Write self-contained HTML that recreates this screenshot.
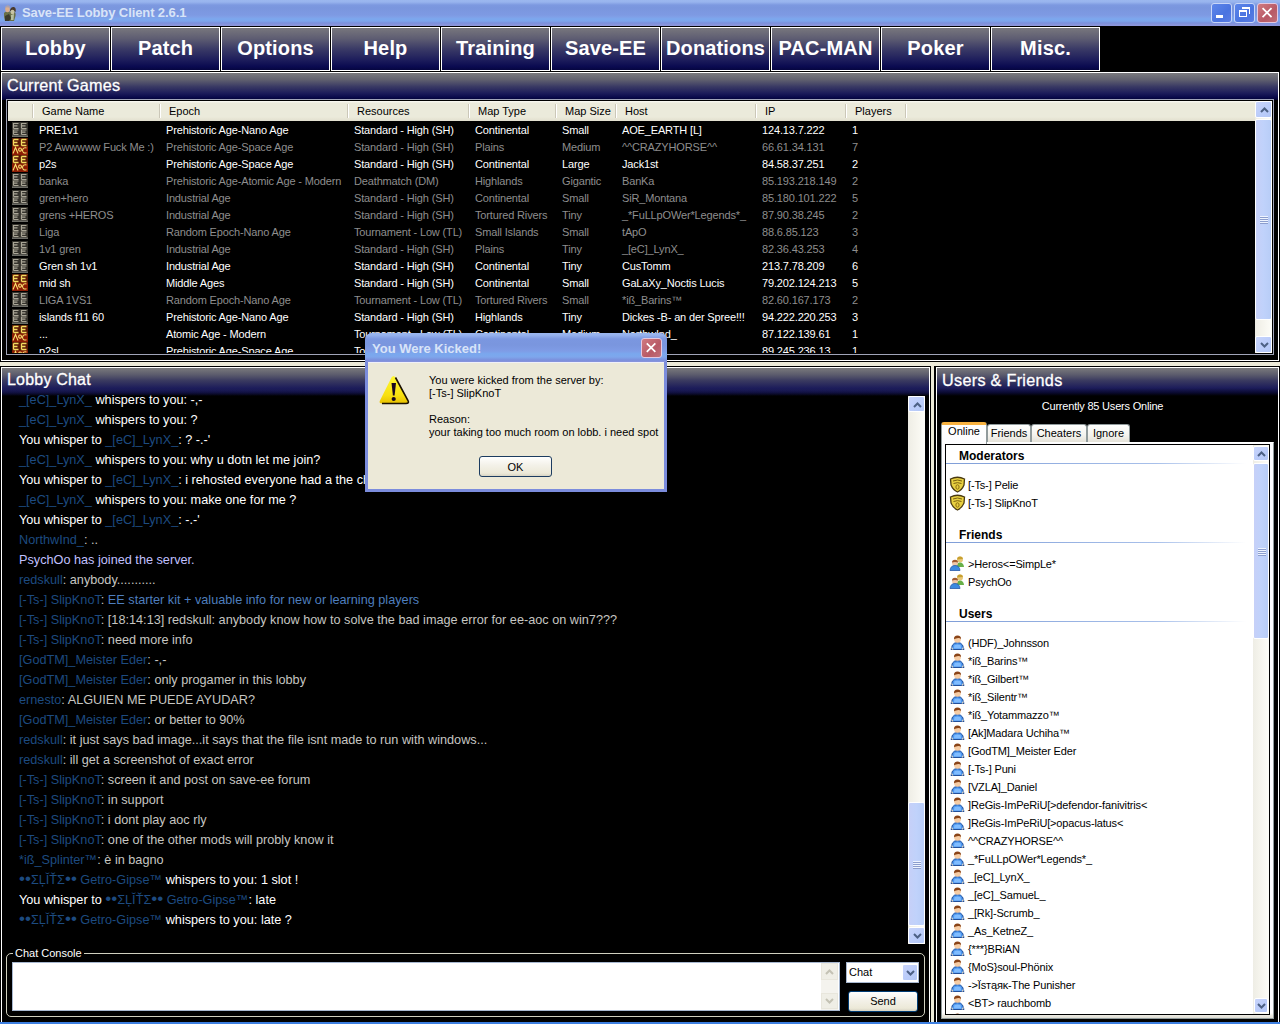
<!DOCTYPE html><html><head><meta charset="utf-8"><style>
*{margin:0;padding:0;box-sizing:border-box}
html,body{width:1280px;height:1024px;overflow:hidden;background:#000;font-family:"Liberation Sans",sans-serif}
.abs{position:absolute}
.nw{white-space:nowrap}
#title{left:0;top:0;width:1280px;height:26px;
 background:linear-gradient(#9bb7ef 0px,#98b4ee 2px,#7d99e0 5px,#7a96de 8px,#7e9ae3 15px,#80a0e8 17px,#7ca8ee 19px,#7da5ec 21px,#7b90dc 23px,#8c96dc 25px)}
#title .t{left:22px;top:4px;font-size:13px;font-weight:bold;color:#d8e4f8;line-height:17px;letter-spacing:-0.1px}
.tb{top:3px;width:21px;height:20px;border:1px solid #c8d6f8;border-radius:3px;background:linear-gradient(135deg,#5d86ea,#4a74e0 60%,#5a7ce4)}
.tb.cl{background:linear-gradient(135deg,#d07a80,#b85a66 60%,#c0707a);border-color:#e4c8e0}
.mb{top:27px;width:109px;height:44px;border:1px solid #fff;
 background:linear-gradient(#78777d 0%,#5e5d72 25%,#3a3a66 50%,#1e1e5c 75%,#0a0a50 92%,#060640 100%);
 color:#fff;font-weight:bold;font-size:20px;text-align:center;line-height:41px;letter-spacing:0.15px}
.panel{border:1px solid #fff;background:#000}
.ph{left:0;top:0;right:0;height:27px;background:linear-gradient(#7a7a7e 0%,#60606f 25%,#3a3a64 50%,#1c1c5a 75%,#080848 92%,#02022c 100%)}
.ph2{left:0;top:0;right:0;height:28px;background:linear-gradient(#7a7a7c 0%,#5a5a6c 25%,#3a3a60 45%,#1c1c5a 72%,#0a0a30 88%,#000 100%)}
.pt{color:#fff;font-size:16px;line-height:20px}
.lv{font-size:11px;line-height:17px;letter-spacing:-0.15px}
.hdr{background:linear-gradient(#fbfbf4 0,#f4f3ea 1px,#ebeadb 2px,#ebeadb 16px,#e6e4d4 18px,#e2dfd0 20px);color:#000;font-size:11px;line-height:18px}
.sep{top:3px;width:2px;height:14px;border-left:1px solid #cbc7b8;border-right:1px solid #fff}
.row{left:0;height:17px;width:1247px}
.row span{position:absolute;top:1px;white-space:nowrap}
.w{color:#fff}.g{color:#8e8e8e}
.sbtrk{background:linear-gradient(90deg,#eeede5,#f6f5ee 50%,#fdfdf8)}
.sbbtn{border:1px solid #fff;border-radius:2px;background:linear-gradient(135deg,#c8d4fb,#bccdfa 50%,#b2c6f6)}
.thumb{border:1px solid #fff;border-radius:2px;background:linear-gradient(90deg,#c6d0f8,#c0d2fb 50%,#b8cdf7)}
.chat{font-size:12.7px;line-height:20px;color:#c6c6c2}
.chat div{position:absolute;left:17px;white-space:nowrap}
.n{color:#1d4b80}
.wh{color:#fff}
.ul{font-size:11px;color:#000;letter-spacing:-0.15px}
.sh{font-size:12px;font-weight:bold;color:#000}
</style></head><body>
<div id="title" class="abs">
<svg class="abs" style="left:2px;top:2px" width="16" height="20" viewBox="0 0 16 20"><path d="M2 11 Q3 9 6 9.5 L12 9.5 Q14 10 13.5 14 L12 19 L3 19 Q1.5 15 2 11Z" fill="#6a7048"/><path d="M3 14 L7 12 L9 16 L7 19 L3 19Z" fill="#3c3a2c"/><path d="M9 13 L12 12 L11.5 18 L9 18Z" fill="#b8c0a0"/><ellipse cx="5.5" cy="7" rx="2.3" ry="3.3" fill="#dcae8c"/><path d="M3 5.5 Q5 1.5 8 4.5 L7.5 6 Q5 4.5 3.2 6.5Z" fill="#a8a0b0"/><path d="M8 8 Q9 4.5 12 5 Q14.5 6 13.5 10 Q11 8 8 9Z" fill="#4a3a2c"/><ellipse cx="10.5" cy="10" rx="2" ry="2.2" fill="#c8c4a4"/></svg>
<div class="abs t nw">Save-EE Lobby Client 2.6.1</div>
<div class="abs tb" style="left:1211px"><div class="abs" style="left:4px;top:11px;width:7px;height:3px;background:#fff"></div></div>
<div class="abs tb" style="left:1234px"><div class="abs" style="left:4px;top:6px;width:8px;height:7px;border:1px solid #fff;border-top-width:2px"></div><div class="abs" style="left:7px;top:3px;width:8px;height:7px;border:1px solid #fff;border-top-width:2px;border-left:none;border-bottom:none"></div></div>
<svg class="abs tb cl" style="left:1257px" width="21" height="20" viewBox="0 0 21 20"><path d="M5 4.5 L15 14.5 M15 4.5 L5 14.5" stroke="#fff" stroke-width="2"/></svg>
</div>
<div class="abs mb" style="left:1px">Lobby</div>
<div class="abs mb" style="left:111px">Patch</div>
<div class="abs mb" style="left:221px">Options</div>
<div class="abs mb" style="left:331px">Help</div>
<div class="abs mb" style="left:441px">Training</div>
<div class="abs mb" style="left:551px">Save-EE</div>
<div class="abs mb" style="left:661px">Donations</div>
<div class="abs mb" style="left:771px">PAC-MAN</div>
<div class="abs mb" style="left:881px">Poker</div>
<div class="abs mb" style="left:991px">Misc.</div>
<div class="abs panel" style="left:1px;top:72px;width:1278px;height:289px">
<div class="abs ph"></div>
<div class="abs pt nw" style="left:5px;top:2px;font-size:16.2px;letter-spacing:0.2px;-webkit-text-stroke:0.3px #fff">Current Games</div>
<div class="abs" style="left:4px;top:26px;width:1268px;height:256px;border:1px solid #a0a4b8;background:#000">
<div class="abs" style="left:0;top:0;width:1266px;height:254px;border:1px solid #000;overflow:hidden">
<div class="abs hdr" style="left:0;top:0;width:1247px;height:20px">
<div class="abs sep" style="left:24px"></div>
<div class="abs sep" style="left:151px"></div>
<div class="abs sep" style="left:339px"></div>
<div class="abs sep" style="left:460px"></div>
<div class="abs sep" style="left:547px"></div>
<div class="abs sep" style="left:607px"></div>
<div class="abs sep" style="left:747px"></div>
<div class="abs sep" style="left:837px"></div>
<div class="abs sep" style="left:897px"></div>
<div class="abs nw" style="left:34px;top:1px">Game Name</div>
<div class="abs nw" style="left:161px;top:1px">Epoch</div>
<div class="abs nw" style="left:349px;top:1px">Resources</div>
<div class="abs nw" style="left:470px;top:1px">Map Type</div>
<div class="abs nw" style="left:557px;top:1px">Map Size</div>
<div class="abs nw" style="left:617px;top:1px">Host</div>
<div class="abs nw" style="left:757px;top:1px">IP</div>
<div class="abs nw" style="left:847px;top:1px">Players</div>
</div>
<div class="abs row lv w" style="top:20px">
<svg class="abs" style="left:4px;top:1px" width="16" height="15" viewBox="0 0 16 15"><rect x="0" y="0" width="16" height="14" fill="#34322c"/><path d="M1.5 1v5.5M1.5 1.5h5M1.5 3.8h4M1.5 6.5h5M9.5 1v5.5M9.5 1.5h5M9.5 3.8h4M9.5 6.5h5M1.5 7.5v5M1.5 8h5M1.5 10.2h4M1.5 12.5h5M9.5 7.5v5M9.5 8h5M9.5 10.2h4M9.5 12.5h5" stroke="#a9a596" stroke-width="1.2" fill="none"/><rect x="0" y="13.5" width="16" height="1.5" fill="#6c6c66"/></svg>
<span style="left:31px">PRE1v1</span>
<span style="left:158px">Prehistoric Age-Nano Age</span>
<span style="left:346px">Standard - High (SH)</span>
<span style="left:467px">Continental</span>
<span style="left:554px">Small</span>
<span style="left:614px">AOE_EARTH [L]</span>
<span style="left:754px">124.13.7.222</span>
<span style="left:844px">1</span>
</div>
<div class="abs row lv g" style="top:37px">
<svg class="abs" style="left:4px;top:0px" width="16" height="17" viewBox="0 0 16 17"><rect x="0" y="0" width="16" height="17" fill="#8c1c04"/><rect x="0" y="0" width="16" height="8.5" fill="#5a1804"/><path d="M1.5 1.5h5M1.5 1.5v6M1.5 4.5h4M1.5 7.5h5M9.5 1.5h5M9.5 1.5v6M9.5 4.5h4M9.5 7.5h5" stroke="#f4dc60" stroke-width="1.3" fill="none"/><path d="M1 15.5 L3.5 9.5 L6 15.5 M8 10 a1.4 1.6 0 1 0 0.1 0 M14.5 10 Q11 9 10.5 12.5 Q11 15.8 14.5 14.8" stroke="#f8e070" stroke-width="1.1" fill="none"/></svg>
<span style="left:31px">P2 Awwwww Fuck Me :)</span>
<span style="left:158px">Prehistoric Age-Space Age</span>
<span style="left:346px">Standard - High (SH)</span>
<span style="left:467px">Plains</span>
<span style="left:554px">Medium</span>
<span style="left:614px">^^CRAZYHORSE^^</span>
<span style="left:754px">66.61.34.131</span>
<span style="left:844px">7</span>
</div>
<div class="abs row lv w" style="top:54px">
<svg class="abs" style="left:4px;top:0px" width="16" height="17" viewBox="0 0 16 17"><rect x="0" y="0" width="16" height="17" fill="#8c1c04"/><rect x="0" y="0" width="16" height="8.5" fill="#5a1804"/><path d="M1.5 1.5h5M1.5 1.5v6M1.5 4.5h4M1.5 7.5h5M9.5 1.5h5M9.5 1.5v6M9.5 4.5h4M9.5 7.5h5" stroke="#f4dc60" stroke-width="1.3" fill="none"/><path d="M1 15.5 L3.5 9.5 L6 15.5 M8 10 a1.4 1.6 0 1 0 0.1 0 M14.5 10 Q11 9 10.5 12.5 Q11 15.8 14.5 14.8" stroke="#f8e070" stroke-width="1.1" fill="none"/></svg>
<span style="left:31px">p2s</span>
<span style="left:158px">Prehistoric Age-Space Age</span>
<span style="left:346px">Standard - High (SH)</span>
<span style="left:467px">Continental</span>
<span style="left:554px">Large</span>
<span style="left:614px">Jack1st</span>
<span style="left:754px">84.58.37.251</span>
<span style="left:844px">2</span>
</div>
<div class="abs row lv g" style="top:71px">
<svg class="abs" style="left:4px;top:1px" width="16" height="15" viewBox="0 0 16 15"><rect x="0" y="0" width="16" height="14" fill="#34322c"/><path d="M1.5 1v5.5M1.5 1.5h5M1.5 3.8h4M1.5 6.5h5M9.5 1v5.5M9.5 1.5h5M9.5 3.8h4M9.5 6.5h5M1.5 7.5v5M1.5 8h5M1.5 10.2h4M1.5 12.5h5M9.5 7.5v5M9.5 8h5M9.5 10.2h4M9.5 12.5h5" stroke="#a9a596" stroke-width="1.2" fill="none"/><rect x="0" y="13.5" width="16" height="1.5" fill="#6c6c66"/></svg>
<span style="left:31px">banka</span>
<span style="left:158px">Prehistoric Age-Atomic Age - Modern</span>
<span style="left:346px">Deathmatch (DM)</span>
<span style="left:467px">Highlands</span>
<span style="left:554px">Gigantic</span>
<span style="left:614px">BanKa</span>
<span style="left:754px">85.193.218.149</span>
<span style="left:844px">2</span>
</div>
<div class="abs row lv g" style="top:88px">
<svg class="abs" style="left:4px;top:1px" width="16" height="15" viewBox="0 0 16 15"><rect x="0" y="0" width="16" height="14" fill="#34322c"/><path d="M1.5 1v5.5M1.5 1.5h5M1.5 3.8h4M1.5 6.5h5M9.5 1v5.5M9.5 1.5h5M9.5 3.8h4M9.5 6.5h5M1.5 7.5v5M1.5 8h5M1.5 10.2h4M1.5 12.5h5M9.5 7.5v5M9.5 8h5M9.5 10.2h4M9.5 12.5h5" stroke="#a9a596" stroke-width="1.2" fill="none"/><rect x="0" y="13.5" width="16" height="1.5" fill="#6c6c66"/></svg>
<span style="left:31px">gren+hero</span>
<span style="left:158px">Industrial Age</span>
<span style="left:346px">Standard - High (SH)</span>
<span style="left:467px">Continental</span>
<span style="left:554px">Small</span>
<span style="left:614px">SiR_Montana</span>
<span style="left:754px">85.180.101.222</span>
<span style="left:844px">5</span>
</div>
<div class="abs row lv g" style="top:105px">
<svg class="abs" style="left:4px;top:1px" width="16" height="15" viewBox="0 0 16 15"><rect x="0" y="0" width="16" height="14" fill="#34322c"/><path d="M1.5 1v5.5M1.5 1.5h5M1.5 3.8h4M1.5 6.5h5M9.5 1v5.5M9.5 1.5h5M9.5 3.8h4M9.5 6.5h5M1.5 7.5v5M1.5 8h5M1.5 10.2h4M1.5 12.5h5M9.5 7.5v5M9.5 8h5M9.5 10.2h4M9.5 12.5h5" stroke="#a9a596" stroke-width="1.2" fill="none"/><rect x="0" y="13.5" width="16" height="1.5" fill="#6c6c66"/></svg>
<span style="left:31px">grens +HEROS</span>
<span style="left:158px">Industrial Age</span>
<span style="left:346px">Standard - High (SH)</span>
<span style="left:467px">Tortured Rivers</span>
<span style="left:554px">Tiny</span>
<span style="left:614px">_*FuLLpOWer*Legends*_</span>
<span style="left:754px">87.90.38.245</span>
<span style="left:844px">2</span>
</div>
<div class="abs row lv g" style="top:122px">
<svg class="abs" style="left:4px;top:1px" width="16" height="15" viewBox="0 0 16 15"><rect x="0" y="0" width="16" height="14" fill="#34322c"/><path d="M1.5 1v5.5M1.5 1.5h5M1.5 3.8h4M1.5 6.5h5M9.5 1v5.5M9.5 1.5h5M9.5 3.8h4M9.5 6.5h5M1.5 7.5v5M1.5 8h5M1.5 10.2h4M1.5 12.5h5M9.5 7.5v5M9.5 8h5M9.5 10.2h4M9.5 12.5h5" stroke="#a9a596" stroke-width="1.2" fill="none"/><rect x="0" y="13.5" width="16" height="1.5" fill="#6c6c66"/></svg>
<span style="left:31px">Liga</span>
<span style="left:158px">Random Epoch-Nano Age</span>
<span style="left:346px">Tournament - Low (TL)</span>
<span style="left:467px">Small Islands</span>
<span style="left:554px">Small</span>
<span style="left:614px">tApO</span>
<span style="left:754px">88.6.85.123</span>
<span style="left:844px">3</span>
</div>
<div class="abs row lv g" style="top:139px">
<svg class="abs" style="left:4px;top:1px" width="16" height="15" viewBox="0 0 16 15"><rect x="0" y="0" width="16" height="14" fill="#34322c"/><path d="M1.5 1v5.5M1.5 1.5h5M1.5 3.8h4M1.5 6.5h5M9.5 1v5.5M9.5 1.5h5M9.5 3.8h4M9.5 6.5h5M1.5 7.5v5M1.5 8h5M1.5 10.2h4M1.5 12.5h5M9.5 7.5v5M9.5 8h5M9.5 10.2h4M9.5 12.5h5" stroke="#a9a596" stroke-width="1.2" fill="none"/><rect x="0" y="13.5" width="16" height="1.5" fill="#6c6c66"/></svg>
<span style="left:31px">1v1 gren</span>
<span style="left:158px">Industrial Age</span>
<span style="left:346px">Standard - High (SH)</span>
<span style="left:467px">Plains</span>
<span style="left:554px">Tiny</span>
<span style="left:614px">_[eC]_LynX_</span>
<span style="left:754px">82.36.43.253</span>
<span style="left:844px">4</span>
</div>
<div class="abs row lv w" style="top:156px">
<svg class="abs" style="left:4px;top:1px" width="16" height="15" viewBox="0 0 16 15"><rect x="0" y="0" width="16" height="14" fill="#34322c"/><path d="M1.5 1v5.5M1.5 1.5h5M1.5 3.8h4M1.5 6.5h5M9.5 1v5.5M9.5 1.5h5M9.5 3.8h4M9.5 6.5h5M1.5 7.5v5M1.5 8h5M1.5 10.2h4M1.5 12.5h5M9.5 7.5v5M9.5 8h5M9.5 10.2h4M9.5 12.5h5" stroke="#a9a596" stroke-width="1.2" fill="none"/><rect x="0" y="13.5" width="16" height="1.5" fill="#6c6c66"/></svg>
<span style="left:31px">Gren sh 1v1</span>
<span style="left:158px">Industrial Age</span>
<span style="left:346px">Standard - High (SH)</span>
<span style="left:467px">Continental</span>
<span style="left:554px">Tiny</span>
<span style="left:614px">CusTomm</span>
<span style="left:754px">213.7.78.209</span>
<span style="left:844px">6</span>
</div>
<div class="abs row lv w" style="top:173px">
<svg class="abs" style="left:4px;top:0px" width="16" height="17" viewBox="0 0 16 17"><rect x="0" y="0" width="16" height="17" fill="#8c1c04"/><rect x="0" y="0" width="16" height="8.5" fill="#5a1804"/><path d="M1.5 1.5h5M1.5 1.5v6M1.5 4.5h4M1.5 7.5h5M9.5 1.5h5M9.5 1.5v6M9.5 4.5h4M9.5 7.5h5" stroke="#f4dc60" stroke-width="1.3" fill="none"/><path d="M1 15.5 L3.5 9.5 L6 15.5 M8 10 a1.4 1.6 0 1 0 0.1 0 M14.5 10 Q11 9 10.5 12.5 Q11 15.8 14.5 14.8" stroke="#f8e070" stroke-width="1.1" fill="none"/></svg>
<span style="left:31px">mid sh</span>
<span style="left:158px">Middle Ages</span>
<span style="left:346px">Standard - High (SH)</span>
<span style="left:467px">Continental</span>
<span style="left:554px">Small</span>
<span style="left:614px">GaLaXy_Noctis Lucis</span>
<span style="left:754px">79.202.124.213</span>
<span style="left:844px">5</span>
</div>
<div class="abs row lv g" style="top:190px">
<svg class="abs" style="left:4px;top:1px" width="16" height="15" viewBox="0 0 16 15"><rect x="0" y="0" width="16" height="14" fill="#34322c"/><path d="M1.5 1v5.5M1.5 1.5h5M1.5 3.8h4M1.5 6.5h5M9.5 1v5.5M9.5 1.5h5M9.5 3.8h4M9.5 6.5h5M1.5 7.5v5M1.5 8h5M1.5 10.2h4M1.5 12.5h5M9.5 7.5v5M9.5 8h5M9.5 10.2h4M9.5 12.5h5" stroke="#a9a596" stroke-width="1.2" fill="none"/><rect x="0" y="13.5" width="16" height="1.5" fill="#6c6c66"/></svg>
<span style="left:31px">LIGA 1VS1</span>
<span style="left:158px">Random Epoch-Nano Age</span>
<span style="left:346px">Tournament - Low (TL)</span>
<span style="left:467px">Tortured Rivers</span>
<span style="left:554px">Small</span>
<span style="left:614px">*iß_Barins™</span>
<span style="left:754px">82.60.167.173</span>
<span style="left:844px">2</span>
</div>
<div class="abs row lv w" style="top:207px">
<svg class="abs" style="left:4px;top:1px" width="16" height="15" viewBox="0 0 16 15"><rect x="0" y="0" width="16" height="14" fill="#34322c"/><path d="M1.5 1v5.5M1.5 1.5h5M1.5 3.8h4M1.5 6.5h5M9.5 1v5.5M9.5 1.5h5M9.5 3.8h4M9.5 6.5h5M1.5 7.5v5M1.5 8h5M1.5 10.2h4M1.5 12.5h5M9.5 7.5v5M9.5 8h5M9.5 10.2h4M9.5 12.5h5" stroke="#a9a596" stroke-width="1.2" fill="none"/><rect x="0" y="13.5" width="16" height="1.5" fill="#6c6c66"/></svg>
<span style="left:31px">islands f11 60</span>
<span style="left:158px">Prehistoric Age-Nano Age</span>
<span style="left:346px">Standard - High (SH)</span>
<span style="left:467px">Highlands</span>
<span style="left:554px">Tiny</span>
<span style="left:614px">Dickes -B- an der Spree!!!</span>
<span style="left:754px">94.222.220.253</span>
<span style="left:844px">3</span>
</div>
<div class="abs row lv w" style="top:224px">
<svg class="abs" style="left:4px;top:0px" width="16" height="17" viewBox="0 0 16 17"><rect x="0" y="0" width="16" height="17" fill="#8c1c04"/><rect x="0" y="0" width="16" height="8.5" fill="#5a1804"/><path d="M1.5 1.5h5M1.5 1.5v6M1.5 4.5h4M1.5 7.5h5M9.5 1.5h5M9.5 1.5v6M9.5 4.5h4M9.5 7.5h5" stroke="#f4dc60" stroke-width="1.3" fill="none"/><path d="M1 15.5 L3.5 9.5 L6 15.5 M8 10 a1.4 1.6 0 1 0 0.1 0 M14.5 10 Q11 9 10.5 12.5 Q11 15.8 14.5 14.8" stroke="#f8e070" stroke-width="1.1" fill="none"/></svg>
<span style="left:31px">...</span>
<span style="left:158px">Atomic Age - Modern</span>
<span style="left:346px">Tournament - Low (TL)</span>
<span style="left:467px">Continental</span>
<span style="left:554px">Medium</span>
<span style="left:614px">NorthwInd_</span>
<span style="left:754px">87.122.139.61</span>
<span style="left:844px">1</span>
</div>
<div class="abs row lv w" style="top:241px">
<svg class="abs" style="left:4px;top:0px" width="16" height="17" viewBox="0 0 16 17"><rect x="0" y="0" width="16" height="17" fill="#8c1c04"/><rect x="0" y="0" width="16" height="8.5" fill="#5a1804"/><path d="M1.5 1.5h5M1.5 1.5v6M1.5 4.5h4M1.5 7.5h5M9.5 1.5h5M9.5 1.5v6M9.5 4.5h4M9.5 7.5h5" stroke="#f4dc60" stroke-width="1.3" fill="none"/><path d="M1 15.5 L3.5 9.5 L6 15.5 M8 10 a1.4 1.6 0 1 0 0.1 0 M14.5 10 Q11 9 10.5 12.5 Q11 15.8 14.5 14.8" stroke="#f8e070" stroke-width="1.1" fill="none"/></svg>
<span style="left:31px">p2sl</span>
<span style="left:158px">Prehistoric Age-Space Age</span>
<span style="left:346px">Tournament - Low (TL)</span>
<span style="left:467px">Continental</span>
<span style="left:554px">Small</span>
<span style="left:614px">p2sl</span>
<span style="left:754px">89.245.236.13</span>
<span style="left:844px">1</span>
</div>
<div class="abs sbtrk" style="left:1247px;top:0;width:17px;height:252px">
<div class="abs sbbtn" style="left:0;top:0;width:17px;height:17px"><svg class="abs" style="left:4px;top:5px" width="9" height="6"><path d="M1 5 L4.5 1.5 L8 5" stroke="#4d6185" stroke-width="2" fill="none"/></svg></div>
<div class="abs thumb" style="left:0;top:18px;width:17px;height:201px"><div class="abs" style="left:4px;top:96px;width:8px;height:8px;background:repeating-linear-gradient(#eef4ff 0,#eef4ff 1px,#8c9ece 1px,#8c9ece 2px)"></div></div>
<div class="abs sbbtn" style="left:0;top:235px;width:17px;height:17px"><svg class="abs" style="left:4px;top:5px" width="9" height="6"><path d="M1 1 L4.5 4.5 L8 1" stroke="#4d6185" stroke-width="2" fill="none"/></svg></div>
</div>
</div></div>
</div>
<div class="abs" style="left:0;top:362px;width:1280px;height:4px;background:#ecead8"></div>
<div class="abs" style="left:931px;top:362px;width:3px;height:660px;background:#ecead8"></div>
<div class="abs panel" style="left:1px;top:367px;width:929px;height:700px">
<div class="abs ph2"></div>
<div class="abs pt nw" style="left:5px;top:2px;font-size:16px;letter-spacing:0.2px;-webkit-text-stroke:0.3px #fff">Lobby Chat</div>
<div class="abs chat" style="left:0;top:0;width:906px;height:576px;overflow:hidden">
<div style="top:22px"><span class="n">_[eC]_LynX_</span><span class="wh"> whispers to you: -,-</span></div>
<div style="top:42px"><span class="n">_[eC]_LynX_</span><span class="wh"> whispers to you: ?</span></div>
<div style="top:62px"><span class="wh">You whisper to </span><span class="n">_[eC]_LynX_</span><span class="wh">: ? -.-&#x27;</span></div>
<div style="top:82px"><span class="n">_[eC]_LynX_</span><span class="wh"> whispers to you: why u dotn let me join?</span></div>
<div style="top:102px"><span class="wh">You whisper to </span><span class="n">_[eC]_LynX_</span><span class="wh">: i rehosted everyone had a the chance to join</span></div>
<div style="top:122px"><span class="n">_[eC]_LynX_</span><span class="wh"> whispers to you: make one for me ?</span></div>
<div style="top:142px"><span class="wh">You whisper to </span><span class="n">_[eC]_LynX_</span><span class="wh">: -.-&#x27;</span></div>
<div style="top:162px"><span class="n">NorthwInd_</span>: ..</div>
<div style="top:182px"><span style="color:#c0c0ff">PsychOo has joined the server.</span></div>
<div style="top:202px"><span class="n">redskull</span>: anybody...........</div>
<div style="top:222px"><span class="n">[-Ts-] SlipKnoT</span>: <span style="color:#4e7ebe">EE starter kit + valuable info for new or learning players</span></div>
<div style="top:242px"><span class="n">[-Ts-] SlipKnoT</span>: [18:14:13] redskull: anybody know how to solve the bad image error for ee-aoc on win7???</div>
<div style="top:262px"><span class="n">[-Ts-] SlipKnoT</span>: need more info</div>
<div style="top:282px"><span class="n">[GodTM]_Meister Eder</span>: -,-</div>
<div style="top:302px"><span class="n">[GodTM]_Meister Eder</span>: only progamer in this lobby</div>
<div style="top:322px"><span class="n">ernesto</span>: ALGUIEN ME PUEDE AYUDAR?</div>
<div style="top:342px"><span class="n">[GodTM]_Meister Eder</span>: or better to 90%</div>
<div style="top:362px"><span class="n">redskull</span>: it just says bad image...it says that the file isnt made to run with windows...</div>
<div style="top:382px"><span class="n">redskull</span>: ill get a screenshot of exact error</div>
<div style="top:402px"><span class="n">[-Ts-] SlipKnoT</span>: screen it and post on save-ee forum</div>
<div style="top:422px"><span class="n">[-Ts-] SlipKnoT</span>: in support</div>
<div style="top:442px"><span class="n">[-Ts-] SlipKnoT</span>: i dont play aoc rly</div>
<div style="top:462px"><span class="n">[-Ts-] SlipKnoT</span>: one of the other mods will probly know it</div>
<div style="top:482px"><span class="n">*iß_Splinter™</span>: è in bagno</div>
<div style="top:502px"><span class="n"><span style="font-size:17px;line-height:10px">••</span>ΣĻĬŤΣ<span style="font-size:17px;line-height:10px">••</span> Getro-Gipse™</span><span class="wh"> whispers to you: 1 slot !</span></div>
<div style="top:522px"><span class="wh">You whisper to </span><span class="n"><span style="font-size:17px;line-height:10px">••</span>ΣĻĬŤΣ<span style="font-size:17px;line-height:10px">••</span> Getro-Gipse™</span><span class="wh">: late</span></div>
<div style="top:542px"><span class="n"><span style="font-size:17px;line-height:10px">••</span>ΣĻĬŤΣ<span style="font-size:17px;line-height:10px">••</span> Getro-Gipse™</span><span class="wh"> whispers to you: late ?</span></div>
</div>
<div class="abs" style="left:0;top:20px;right:0;height:8px;background:linear-gradient(rgba(28,28,90,0.85),rgba(0,0,0,0))"></div>
<div class="abs sbtrk" style="left:906px;top:28px;width:17px;height:548px">
<div class="abs sbbtn" style="left:0;top:0;width:17px;height:16px"><svg class="abs" style="left:4px;top:5px" width="9" height="6"><path d="M1 5 L4.5 1.5 L8 5" stroke="#4d6185" stroke-width="2" fill="none"/></svg></div>
<div class="abs thumb" style="left:0;top:406px;width:17px;height:124px"><div class="abs" style="left:4px;top:58px;width:8px;height:8px;background:repeating-linear-gradient(#eef4ff 0,#eef4ff 1px,#8c9ece 1px,#8c9ece 2px)"></div></div>
<div class="abs sbbtn" style="left:0;top:531px;width:17px;height:17px"><svg class="abs" style="left:4px;top:5px" width="9" height="6"><path d="M1 1 L4.5 4.5 L8 1" stroke="#4d6185" stroke-width="2" fill="none"/></svg></div>
</div>
<div class="abs" style="left:4px;top:585px;width:919px;height:64px;border:1px solid #d0d0bf;border-radius:5px"></div>
<div class="abs nw" style="left:11px;top:578px;padding:0 2px;background:#000;color:#fff;font-size:11px;line-height:14px">Chat Console</div>
<div class="abs" style="left:10px;top:594px;width:828px;height:49px;background:#fff;border:1px solid #a8b8d0"></div>
<div class="abs" style="left:819px;top:595px;width:17px;height:47px;background:#f4f3ee"></div>
<div class="abs" style="left:819px;top:595px;width:17px;height:17px;background:#efeee6;border:1px solid #e8e6dc"><svg class="abs" style="left:3px;top:5px" width="9" height="6"><path d="M1 5 L4.5 1.5 L8 5" stroke="#c4c2b4" stroke-width="2" fill="none"/></svg></div>
<div class="abs" style="left:819px;top:625px;width:17px;height:16px;background:#efeee6;border:1px solid #e8e6dc"><svg class="abs" style="left:3px;top:4px" width="9" height="6"><path d="M1 1 L4.5 4.5 L8 1" stroke="#c4c2b4" stroke-width="2" fill="none"/></svg></div>
<div class="abs" style="left:844px;top:594px;width:73px;height:21px;background:#fff;border:1px solid #a8b8d0"><div class="abs nw" style="left:2px;top:3px;font-size:11px;line-height:13px;color:#000">Chat</div>
<div class="abs sbbtn" style="left:55px;top:1px;width:16px;height:17px"><svg class="abs" style="left:3px;top:5px" width="9" height="6"><path d="M1 1 L4.5 4.5 L8 1" stroke="#4d6185" stroke-width="2" fill="none"/></svg></div></div>
<div class="abs" style="left:846px;top:623px;width:70px;height:21px;border:1px solid #003c74;border-radius:3px;background:linear-gradient(#fffffe,#f4f2ea 40%,#ece9d8 85%,#d8d4c4);font-size:11px;line-height:19px;text-align:center;color:#000">Send</div>
</div>
<div class="abs panel" style="left:936px;top:367px;width:343px;height:700px">
<div class="abs ph2"></div>
<div class="abs pt nw" style="left:5px;top:2px;font-size:16.2px;letter-spacing:0.3px;-webkit-text-stroke:0.3px #fff">Users &amp; Friends</div>
<div class="abs nw" style="left:-5px;width:341px;top:31px;text-align:center;color:#fff;font-size:11px;line-height:14px;letter-spacing:-0.2px">Currently 85 Users Online</div>
<div class="abs" style="left:4px;top:74px;width:333px;height:577px;background:linear-gradient(#fcfcfe 0,#fcfcfe 570px,#ecebe4 572px,#d8d6cc 576px);border:1px solid #919b9c;border-top-color:#fff"></div>
<div class="abs" style="left:4px;top:54px;width:46px;height:22px;background:linear-gradient(#fffffe,#fcfcfe);border:1px solid #919b9c;border-bottom:none;border-top:3px solid #f8b240;border-radius:3px 3px 0 0;font-size:11px;line-height:13px;color:#000;text-align:center">Online</div>
<div class="abs" style="left:50px;top:56px;width:44px;height:18px;background:linear-gradient(#fffffe,#f4f3ee 60%,#e4e2d8);border:1px solid #919b9c;border-bottom:none;border-radius:3px 3px 0 0;font-size:11px;line-height:16px;color:#000;text-align:center">Friends</div>
<div class="abs" style="left:94px;top:56px;width:56px;height:18px;background:linear-gradient(#fffffe,#f4f3ee 60%,#e4e2d8);border:1px solid #919b9c;border-bottom:none;border-radius:3px 3px 0 0;font-size:11px;line-height:16px;color:#000;text-align:center">Cheaters</div>
<div class="abs" style="left:150px;top:56px;width:43px;height:18px;background:linear-gradient(#fffffe,#f4f3ee 60%,#e4e2d8);border:1px solid #919b9c;border-bottom:none;border-radius:3px 3px 0 0;font-size:11px;line-height:16px;color:#000;text-align:center">Ignore</div>
<div class="abs" style="left:8px;top:76px;width:325px;height:571px;border:1px solid #000;background:#fff;overflow:hidden">
<div class="abs sh nw" style="left:13px;top:4px;line-height:14px">Moderators</div>
<div class="abs" style="left:0;top:18px;width:300px;height:1px;background:linear-gradient(90deg,#7f9ed8,#a8c0ea 70%,#fff)"></div>
<div class="abs" style="left:0;top:32px;width:320px;height:17px"><svg class="abs" style="left:3px;top:-1px" width="17" height="17" viewBox="0 0 17 17"><path d="M1.5 3 Q8.5 -0.5 15.5 3 L15 9 Q13 14 8.5 16 Q4 14 2 9 Z" fill="#e8d040" stroke="#4a3a10" stroke-width="1.3"/><path d="M4 5 Q8.5 3 13 5 M4.5 7.5 Q8.5 5.8 12.5 7.5" stroke="#7a6010" stroke-width="1" fill="none"/><ellipse cx="8.5" cy="11" rx="1.6" ry="2.2" fill="none" stroke="#8a6a10" stroke-width="1"/></svg><div class="abs ul nw" style="left:22px;top:1px;line-height:15px">[-Ts-] Pelie</div></div>
<div class="abs" style="left:0;top:50px;width:320px;height:17px"><svg class="abs" style="left:3px;top:-1px" width="17" height="17" viewBox="0 0 17 17"><path d="M1.5 3 Q8.5 -0.5 15.5 3 L15 9 Q13 14 8.5 16 Q4 14 2 9 Z" fill="#e8d040" stroke="#4a3a10" stroke-width="1.3"/><path d="M4 5 Q8.5 3 13 5 M4.5 7.5 Q8.5 5.8 12.5 7.5" stroke="#7a6010" stroke-width="1" fill="none"/><ellipse cx="8.5" cy="11" rx="1.6" ry="2.2" fill="none" stroke="#8a6a10" stroke-width="1"/></svg><div class="abs ul nw" style="left:22px;top:1px;line-height:15px">[-Ts-] SlipKnoT</div></div>
<div class="abs sh nw" style="left:13px;top:83px;line-height:14px">Friends</div>
<div class="abs" style="left:0;top:97px;width:300px;height:1px;background:linear-gradient(90deg,#7f9ed8,#a8c0ea 70%,#fff)"></div>
<div class="abs" style="left:0;top:111px;width:320px;height:17px"><svg class="abs" style="left:3px;top:-1px" width="17" height="17" viewBox="0 0 17 17"><circle cx="11" cy="4.5" r="3" fill="#e8c878"/><path d="M11 1.5 Q8 1.5 8.2 4.5 L13.8 4 Q14 1.5 11 1.5Z" fill="#c8a030"/><path d="M7 12 Q7.5 7.5 11 7.5 Q14.5 7.5 15 12 Z" fill="#68b048"/><circle cx="6" cy="8" r="3" fill="#f0c8a8"/><path d="M3 7.5 Q3 4.8 6 4.8 Q9 4.8 9 7.5 Q6 6.5 3 7.5Z" fill="#a05a30"/><path d="M1 15.5 Q1.5 10.5 6 10.5 Q10.5 10.5 11 15.5 Z" fill="#3c8ae0" stroke="#2a5aa8" stroke-width="0.8"/></svg><div class="abs ul nw" style="left:22px;top:1px;line-height:15px">&gt;Heros&lt;=SimpLe*</div></div>
<div class="abs" style="left:0;top:129px;width:320px;height:17px"><svg class="abs" style="left:3px;top:-1px" width="17" height="17" viewBox="0 0 17 17"><circle cx="11" cy="4.5" r="3" fill="#e8c878"/><path d="M11 1.5 Q8 1.5 8.2 4.5 L13.8 4 Q14 1.5 11 1.5Z" fill="#c8a030"/><path d="M7 12 Q7.5 7.5 11 7.5 Q14.5 7.5 15 12 Z" fill="#68b048"/><circle cx="6" cy="8" r="3" fill="#f0c8a8"/><path d="M3 7.5 Q3 4.8 6 4.8 Q9 4.8 9 7.5 Q6 6.5 3 7.5Z" fill="#a05a30"/><path d="M1 15.5 Q1.5 10.5 6 10.5 Q10.5 10.5 11 15.5 Z" fill="#3c8ae0" stroke="#2a5aa8" stroke-width="0.8"/></svg><div class="abs ul nw" style="left:22px;top:1px;line-height:15px">PsychOo</div></div>
<div class="abs sh nw" style="left:13px;top:162px;line-height:14px">Users</div>
<div class="abs" style="left:0;top:176px;width:300px;height:1px;background:linear-gradient(90deg,#7f9ed8,#a8c0ea 70%,#fff)"></div>
<div class="abs" style="left:0;top:190px;width:320px;height:17px"><svg class="abs" style="left:3px;top:-1px" width="17" height="17" viewBox="0 0 17 17"><path d="M2 15.5 L3.5 11 Q5 8.6 8.5 8.6 Q12 8.6 13.5 11 L15 15.5 Z" fill="#4c96ee" stroke="#22509c" stroke-width="1"/><path d="M5.5 11 Q8.5 9.8 11.5 11 L12.2 14.5 L4.8 14.5 Z" fill="#80bcff"/><path d="M2.5 13.5 L4 15.5 M14.5 13.5 L13 15.5" stroke="#e8d8c0" stroke-width="1.2"/><circle cx="8.5" cy="5.3" r="3.4" fill="#f6cca4"/><path d="M5 5.2 Q4.8 1.6 8.5 1.5 Q12.2 1.6 12 5 Q10.5 3.6 8 4.2 Q6 4.5 5 5.2Z" fill="#8a4418"/></svg><div class="abs ul nw" style="left:22px;top:1px;line-height:15px">(HDF)_Johnsson</div></div>
<div class="abs" style="left:0;top:208px;width:320px;height:17px"><svg class="abs" style="left:3px;top:-1px" width="17" height="17" viewBox="0 0 17 17"><path d="M2 15.5 L3.5 11 Q5 8.6 8.5 8.6 Q12 8.6 13.5 11 L15 15.5 Z" fill="#4c96ee" stroke="#22509c" stroke-width="1"/><path d="M5.5 11 Q8.5 9.8 11.5 11 L12.2 14.5 L4.8 14.5 Z" fill="#80bcff"/><path d="M2.5 13.5 L4 15.5 M14.5 13.5 L13 15.5" stroke="#e8d8c0" stroke-width="1.2"/><circle cx="8.5" cy="5.3" r="3.4" fill="#f6cca4"/><path d="M5 5.2 Q4.8 1.6 8.5 1.5 Q12.2 1.6 12 5 Q10.5 3.6 8 4.2 Q6 4.5 5 5.2Z" fill="#8a4418"/></svg><div class="abs ul nw" style="left:22px;top:1px;line-height:15px">*iß_Barins™</div></div>
<div class="abs" style="left:0;top:226px;width:320px;height:17px"><svg class="abs" style="left:3px;top:-1px" width="17" height="17" viewBox="0 0 17 17"><path d="M2 15.5 L3.5 11 Q5 8.6 8.5 8.6 Q12 8.6 13.5 11 L15 15.5 Z" fill="#4c96ee" stroke="#22509c" stroke-width="1"/><path d="M5.5 11 Q8.5 9.8 11.5 11 L12.2 14.5 L4.8 14.5 Z" fill="#80bcff"/><path d="M2.5 13.5 L4 15.5 M14.5 13.5 L13 15.5" stroke="#e8d8c0" stroke-width="1.2"/><circle cx="8.5" cy="5.3" r="3.4" fill="#f6cca4"/><path d="M5 5.2 Q4.8 1.6 8.5 1.5 Q12.2 1.6 12 5 Q10.5 3.6 8 4.2 Q6 4.5 5 5.2Z" fill="#8a4418"/></svg><div class="abs ul nw" style="left:22px;top:1px;line-height:15px">*iß_Gilbert™</div></div>
<div class="abs" style="left:0;top:244px;width:320px;height:17px"><svg class="abs" style="left:3px;top:-1px" width="17" height="17" viewBox="0 0 17 17"><path d="M2 15.5 L3.5 11 Q5 8.6 8.5 8.6 Q12 8.6 13.5 11 L15 15.5 Z" fill="#4c96ee" stroke="#22509c" stroke-width="1"/><path d="M5.5 11 Q8.5 9.8 11.5 11 L12.2 14.5 L4.8 14.5 Z" fill="#80bcff"/><path d="M2.5 13.5 L4 15.5 M14.5 13.5 L13 15.5" stroke="#e8d8c0" stroke-width="1.2"/><circle cx="8.5" cy="5.3" r="3.4" fill="#f6cca4"/><path d="M5 5.2 Q4.8 1.6 8.5 1.5 Q12.2 1.6 12 5 Q10.5 3.6 8 4.2 Q6 4.5 5 5.2Z" fill="#8a4418"/></svg><div class="abs ul nw" style="left:22px;top:1px;line-height:15px">*iß_Silentr™</div></div>
<div class="abs" style="left:0;top:262px;width:320px;height:17px"><svg class="abs" style="left:3px;top:-1px" width="17" height="17" viewBox="0 0 17 17"><path d="M2 15.5 L3.5 11 Q5 8.6 8.5 8.6 Q12 8.6 13.5 11 L15 15.5 Z" fill="#4c96ee" stroke="#22509c" stroke-width="1"/><path d="M5.5 11 Q8.5 9.8 11.5 11 L12.2 14.5 L4.8 14.5 Z" fill="#80bcff"/><path d="M2.5 13.5 L4 15.5 M14.5 13.5 L13 15.5" stroke="#e8d8c0" stroke-width="1.2"/><circle cx="8.5" cy="5.3" r="3.4" fill="#f6cca4"/><path d="M5 5.2 Q4.8 1.6 8.5 1.5 Q12.2 1.6 12 5 Q10.5 3.6 8 4.2 Q6 4.5 5 5.2Z" fill="#8a4418"/></svg><div class="abs ul nw" style="left:22px;top:1px;line-height:15px">*iß_Yotammazzo™</div></div>
<div class="abs" style="left:0;top:280px;width:320px;height:17px"><svg class="abs" style="left:3px;top:-1px" width="17" height="17" viewBox="0 0 17 17"><path d="M2 15.5 L3.5 11 Q5 8.6 8.5 8.6 Q12 8.6 13.5 11 L15 15.5 Z" fill="#4c96ee" stroke="#22509c" stroke-width="1"/><path d="M5.5 11 Q8.5 9.8 11.5 11 L12.2 14.5 L4.8 14.5 Z" fill="#80bcff"/><path d="M2.5 13.5 L4 15.5 M14.5 13.5 L13 15.5" stroke="#e8d8c0" stroke-width="1.2"/><circle cx="8.5" cy="5.3" r="3.4" fill="#f6cca4"/><path d="M5 5.2 Q4.8 1.6 8.5 1.5 Q12.2 1.6 12 5 Q10.5 3.6 8 4.2 Q6 4.5 5 5.2Z" fill="#8a4418"/></svg><div class="abs ul nw" style="left:22px;top:1px;line-height:15px">[Ak]Madara Uchiha™</div></div>
<div class="abs" style="left:0;top:298px;width:320px;height:17px"><svg class="abs" style="left:3px;top:-1px" width="17" height="17" viewBox="0 0 17 17"><path d="M2 15.5 L3.5 11 Q5 8.6 8.5 8.6 Q12 8.6 13.5 11 L15 15.5 Z" fill="#4c96ee" stroke="#22509c" stroke-width="1"/><path d="M5.5 11 Q8.5 9.8 11.5 11 L12.2 14.5 L4.8 14.5 Z" fill="#80bcff"/><path d="M2.5 13.5 L4 15.5 M14.5 13.5 L13 15.5" stroke="#e8d8c0" stroke-width="1.2"/><circle cx="8.5" cy="5.3" r="3.4" fill="#f6cca4"/><path d="M5 5.2 Q4.8 1.6 8.5 1.5 Q12.2 1.6 12 5 Q10.5 3.6 8 4.2 Q6 4.5 5 5.2Z" fill="#8a4418"/></svg><div class="abs ul nw" style="left:22px;top:1px;line-height:15px">[GodTM]_Meister Eder</div></div>
<div class="abs" style="left:0;top:316px;width:320px;height:17px"><svg class="abs" style="left:3px;top:-1px" width="17" height="17" viewBox="0 0 17 17"><path d="M2 15.5 L3.5 11 Q5 8.6 8.5 8.6 Q12 8.6 13.5 11 L15 15.5 Z" fill="#4c96ee" stroke="#22509c" stroke-width="1"/><path d="M5.5 11 Q8.5 9.8 11.5 11 L12.2 14.5 L4.8 14.5 Z" fill="#80bcff"/><path d="M2.5 13.5 L4 15.5 M14.5 13.5 L13 15.5" stroke="#e8d8c0" stroke-width="1.2"/><circle cx="8.5" cy="5.3" r="3.4" fill="#f6cca4"/><path d="M5 5.2 Q4.8 1.6 8.5 1.5 Q12.2 1.6 12 5 Q10.5 3.6 8 4.2 Q6 4.5 5 5.2Z" fill="#8a4418"/></svg><div class="abs ul nw" style="left:22px;top:1px;line-height:15px">[-Ts-] Puni</div></div>
<div class="abs" style="left:0;top:334px;width:320px;height:17px"><svg class="abs" style="left:3px;top:-1px" width="17" height="17" viewBox="0 0 17 17"><path d="M2 15.5 L3.5 11 Q5 8.6 8.5 8.6 Q12 8.6 13.5 11 L15 15.5 Z" fill="#4c96ee" stroke="#22509c" stroke-width="1"/><path d="M5.5 11 Q8.5 9.8 11.5 11 L12.2 14.5 L4.8 14.5 Z" fill="#80bcff"/><path d="M2.5 13.5 L4 15.5 M14.5 13.5 L13 15.5" stroke="#e8d8c0" stroke-width="1.2"/><circle cx="8.5" cy="5.3" r="3.4" fill="#f6cca4"/><path d="M5 5.2 Q4.8 1.6 8.5 1.5 Q12.2 1.6 12 5 Q10.5 3.6 8 4.2 Q6 4.5 5 5.2Z" fill="#8a4418"/></svg><div class="abs ul nw" style="left:22px;top:1px;line-height:15px">[VZLA]_Daniel</div></div>
<div class="abs" style="left:0;top:352px;width:320px;height:17px"><svg class="abs" style="left:3px;top:-1px" width="17" height="17" viewBox="0 0 17 17"><path d="M2 15.5 L3.5 11 Q5 8.6 8.5 8.6 Q12 8.6 13.5 11 L15 15.5 Z" fill="#4c96ee" stroke="#22509c" stroke-width="1"/><path d="M5.5 11 Q8.5 9.8 11.5 11 L12.2 14.5 L4.8 14.5 Z" fill="#80bcff"/><path d="M2.5 13.5 L4 15.5 M14.5 13.5 L13 15.5" stroke="#e8d8c0" stroke-width="1.2"/><circle cx="8.5" cy="5.3" r="3.4" fill="#f6cca4"/><path d="M5 5.2 Q4.8 1.6 8.5 1.5 Q12.2 1.6 12 5 Q10.5 3.6 8 4.2 Q6 4.5 5 5.2Z" fill="#8a4418"/></svg><div class="abs ul nw" style="left:22px;top:1px;line-height:15px">]ReGis-ImPeRiU[&gt;defendor-fanivitris&lt;</div></div>
<div class="abs" style="left:0;top:370px;width:320px;height:17px"><svg class="abs" style="left:3px;top:-1px" width="17" height="17" viewBox="0 0 17 17"><path d="M2 15.5 L3.5 11 Q5 8.6 8.5 8.6 Q12 8.6 13.5 11 L15 15.5 Z" fill="#4c96ee" stroke="#22509c" stroke-width="1"/><path d="M5.5 11 Q8.5 9.8 11.5 11 L12.2 14.5 L4.8 14.5 Z" fill="#80bcff"/><path d="M2.5 13.5 L4 15.5 M14.5 13.5 L13 15.5" stroke="#e8d8c0" stroke-width="1.2"/><circle cx="8.5" cy="5.3" r="3.4" fill="#f6cca4"/><path d="M5 5.2 Q4.8 1.6 8.5 1.5 Q12.2 1.6 12 5 Q10.5 3.6 8 4.2 Q6 4.5 5 5.2Z" fill="#8a4418"/></svg><div class="abs ul nw" style="left:22px;top:1px;line-height:15px">]ReGis-ImPeRiU[&gt;opacus-latus&lt;</div></div>
<div class="abs" style="left:0;top:388px;width:320px;height:17px"><svg class="abs" style="left:3px;top:-1px" width="17" height="17" viewBox="0 0 17 17"><path d="M2 15.5 L3.5 11 Q5 8.6 8.5 8.6 Q12 8.6 13.5 11 L15 15.5 Z" fill="#4c96ee" stroke="#22509c" stroke-width="1"/><path d="M5.5 11 Q8.5 9.8 11.5 11 L12.2 14.5 L4.8 14.5 Z" fill="#80bcff"/><path d="M2.5 13.5 L4 15.5 M14.5 13.5 L13 15.5" stroke="#e8d8c0" stroke-width="1.2"/><circle cx="8.5" cy="5.3" r="3.4" fill="#f6cca4"/><path d="M5 5.2 Q4.8 1.6 8.5 1.5 Q12.2 1.6 12 5 Q10.5 3.6 8 4.2 Q6 4.5 5 5.2Z" fill="#8a4418"/></svg><div class="abs ul nw" style="left:22px;top:1px;line-height:15px">^^CRAZYHORSE^^</div></div>
<div class="abs" style="left:0;top:406px;width:320px;height:17px"><svg class="abs" style="left:3px;top:-1px" width="17" height="17" viewBox="0 0 17 17"><path d="M2 15.5 L3.5 11 Q5 8.6 8.5 8.6 Q12 8.6 13.5 11 L15 15.5 Z" fill="#4c96ee" stroke="#22509c" stroke-width="1"/><path d="M5.5 11 Q8.5 9.8 11.5 11 L12.2 14.5 L4.8 14.5 Z" fill="#80bcff"/><path d="M2.5 13.5 L4 15.5 M14.5 13.5 L13 15.5" stroke="#e8d8c0" stroke-width="1.2"/><circle cx="8.5" cy="5.3" r="3.4" fill="#f6cca4"/><path d="M5 5.2 Q4.8 1.6 8.5 1.5 Q12.2 1.6 12 5 Q10.5 3.6 8 4.2 Q6 4.5 5 5.2Z" fill="#8a4418"/></svg><div class="abs ul nw" style="left:22px;top:1px;line-height:15px">_*FuLLpOWer*Legends*_</div></div>
<div class="abs" style="left:0;top:424px;width:320px;height:17px"><svg class="abs" style="left:3px;top:-1px" width="17" height="17" viewBox="0 0 17 17"><path d="M2 15.5 L3.5 11 Q5 8.6 8.5 8.6 Q12 8.6 13.5 11 L15 15.5 Z" fill="#4c96ee" stroke="#22509c" stroke-width="1"/><path d="M5.5 11 Q8.5 9.8 11.5 11 L12.2 14.5 L4.8 14.5 Z" fill="#80bcff"/><path d="M2.5 13.5 L4 15.5 M14.5 13.5 L13 15.5" stroke="#e8d8c0" stroke-width="1.2"/><circle cx="8.5" cy="5.3" r="3.4" fill="#f6cca4"/><path d="M5 5.2 Q4.8 1.6 8.5 1.5 Q12.2 1.6 12 5 Q10.5 3.6 8 4.2 Q6 4.5 5 5.2Z" fill="#8a4418"/></svg><div class="abs ul nw" style="left:22px;top:1px;line-height:15px">_[eC]_LynX_</div></div>
<div class="abs" style="left:0;top:442px;width:320px;height:17px"><svg class="abs" style="left:3px;top:-1px" width="17" height="17" viewBox="0 0 17 17"><path d="M2 15.5 L3.5 11 Q5 8.6 8.5 8.6 Q12 8.6 13.5 11 L15 15.5 Z" fill="#4c96ee" stroke="#22509c" stroke-width="1"/><path d="M5.5 11 Q8.5 9.8 11.5 11 L12.2 14.5 L4.8 14.5 Z" fill="#80bcff"/><path d="M2.5 13.5 L4 15.5 M14.5 13.5 L13 15.5" stroke="#e8d8c0" stroke-width="1.2"/><circle cx="8.5" cy="5.3" r="3.4" fill="#f6cca4"/><path d="M5 5.2 Q4.8 1.6 8.5 1.5 Q12.2 1.6 12 5 Q10.5 3.6 8 4.2 Q6 4.5 5 5.2Z" fill="#8a4418"/></svg><div class="abs ul nw" style="left:22px;top:1px;line-height:15px">_[eC]_SamueL_</div></div>
<div class="abs" style="left:0;top:460px;width:320px;height:17px"><svg class="abs" style="left:3px;top:-1px" width="17" height="17" viewBox="0 0 17 17"><path d="M2 15.5 L3.5 11 Q5 8.6 8.5 8.6 Q12 8.6 13.5 11 L15 15.5 Z" fill="#4c96ee" stroke="#22509c" stroke-width="1"/><path d="M5.5 11 Q8.5 9.8 11.5 11 L12.2 14.5 L4.8 14.5 Z" fill="#80bcff"/><path d="M2.5 13.5 L4 15.5 M14.5 13.5 L13 15.5" stroke="#e8d8c0" stroke-width="1.2"/><circle cx="8.5" cy="5.3" r="3.4" fill="#f6cca4"/><path d="M5 5.2 Q4.8 1.6 8.5 1.5 Q12.2 1.6 12 5 Q10.5 3.6 8 4.2 Q6 4.5 5 5.2Z" fill="#8a4418"/></svg><div class="abs ul nw" style="left:22px;top:1px;line-height:15px">_[Rk]-Scrumb_</div></div>
<div class="abs" style="left:0;top:478px;width:320px;height:17px"><svg class="abs" style="left:3px;top:-1px" width="17" height="17" viewBox="0 0 17 17"><path d="M2 15.5 L3.5 11 Q5 8.6 8.5 8.6 Q12 8.6 13.5 11 L15 15.5 Z" fill="#4c96ee" stroke="#22509c" stroke-width="1"/><path d="M5.5 11 Q8.5 9.8 11.5 11 L12.2 14.5 L4.8 14.5 Z" fill="#80bcff"/><path d="M2.5 13.5 L4 15.5 M14.5 13.5 L13 15.5" stroke="#e8d8c0" stroke-width="1.2"/><circle cx="8.5" cy="5.3" r="3.4" fill="#f6cca4"/><path d="M5 5.2 Q4.8 1.6 8.5 1.5 Q12.2 1.6 12 5 Q10.5 3.6 8 4.2 Q6 4.5 5 5.2Z" fill="#8a4418"/></svg><div class="abs ul nw" style="left:22px;top:1px;line-height:15px">_As_KetneZ_</div></div>
<div class="abs" style="left:0;top:496px;width:320px;height:17px"><svg class="abs" style="left:3px;top:-1px" width="17" height="17" viewBox="0 0 17 17"><path d="M2 15.5 L3.5 11 Q5 8.6 8.5 8.6 Q12 8.6 13.5 11 L15 15.5 Z" fill="#4c96ee" stroke="#22509c" stroke-width="1"/><path d="M5.5 11 Q8.5 9.8 11.5 11 L12.2 14.5 L4.8 14.5 Z" fill="#80bcff"/><path d="M2.5 13.5 L4 15.5 M14.5 13.5 L13 15.5" stroke="#e8d8c0" stroke-width="1.2"/><circle cx="8.5" cy="5.3" r="3.4" fill="#f6cca4"/><path d="M5 5.2 Q4.8 1.6 8.5 1.5 Q12.2 1.6 12 5 Q10.5 3.6 8 4.2 Q6 4.5 5 5.2Z" fill="#8a4418"/></svg><div class="abs ul nw" style="left:22px;top:1px;line-height:15px">{***}BRiAN</div></div>
<div class="abs" style="left:0;top:514px;width:320px;height:17px"><svg class="abs" style="left:3px;top:-1px" width="17" height="17" viewBox="0 0 17 17"><path d="M2 15.5 L3.5 11 Q5 8.6 8.5 8.6 Q12 8.6 13.5 11 L15 15.5 Z" fill="#4c96ee" stroke="#22509c" stroke-width="1"/><path d="M5.5 11 Q8.5 9.8 11.5 11 L12.2 14.5 L4.8 14.5 Z" fill="#80bcff"/><path d="M2.5 13.5 L4 15.5 M14.5 13.5 L13 15.5" stroke="#e8d8c0" stroke-width="1.2"/><circle cx="8.5" cy="5.3" r="3.4" fill="#f6cca4"/><path d="M5 5.2 Q4.8 1.6 8.5 1.5 Q12.2 1.6 12 5 Q10.5 3.6 8 4.2 Q6 4.5 5 5.2Z" fill="#8a4418"/></svg><div class="abs ul nw" style="left:22px;top:1px;line-height:15px">{MoS}soul-Phönix</div></div>
<div class="abs" style="left:0;top:532px;width:320px;height:17px"><svg class="abs" style="left:3px;top:-1px" width="17" height="17" viewBox="0 0 17 17"><path d="M2 15.5 L3.5 11 Q5 8.6 8.5 8.6 Q12 8.6 13.5 11 L15 15.5 Z" fill="#4c96ee" stroke="#22509c" stroke-width="1"/><path d="M5.5 11 Q8.5 9.8 11.5 11 L12.2 14.5 L4.8 14.5 Z" fill="#80bcff"/><path d="M2.5 13.5 L4 15.5 M14.5 13.5 L13 15.5" stroke="#e8d8c0" stroke-width="1.2"/><circle cx="8.5" cy="5.3" r="3.4" fill="#f6cca4"/><path d="M5 5.2 Q4.8 1.6 8.5 1.5 Q12.2 1.6 12 5 Q10.5 3.6 8 4.2 Q6 4.5 5 5.2Z" fill="#8a4418"/></svg><div class="abs ul nw" style="left:22px;top:1px;line-height:15px">-&gt;Ïsтąяĸ-The Punisher</div></div>
<div class="abs" style="left:0;top:550px;width:320px;height:17px"><svg class="abs" style="left:3px;top:-1px" width="17" height="17" viewBox="0 0 17 17"><path d="M2 15.5 L3.5 11 Q5 8.6 8.5 8.6 Q12 8.6 13.5 11 L15 15.5 Z" fill="#4c96ee" stroke="#22509c" stroke-width="1"/><path d="M5.5 11 Q8.5 9.8 11.5 11 L12.2 14.5 L4.8 14.5 Z" fill="#80bcff"/><path d="M2.5 13.5 L4 15.5 M14.5 13.5 L13 15.5" stroke="#e8d8c0" stroke-width="1.2"/><circle cx="8.5" cy="5.3" r="3.4" fill="#f6cca4"/><path d="M5 5.2 Q4.8 1.6 8.5 1.5 Q12.2 1.6 12 5 Q10.5 3.6 8 4.2 Q6 4.5 5 5.2Z" fill="#8a4418"/></svg><div class="abs ul nw" style="left:22px;top:1px;line-height:15px">&lt;BT&gt; rauchbomb</div></div>
<div class="abs" style="left:0;top:568px;width:320px;height:17px"><svg class="abs" style="left:3px;top:-1px" width="17" height="17" viewBox="0 0 17 17"><path d="M2 15.5 L3.5 11 Q5 8.6 8.5 8.6 Q12 8.6 13.5 11 L15 15.5 Z" fill="#4c96ee" stroke="#22509c" stroke-width="1"/><path d="M5.5 11 Q8.5 9.8 11.5 11 L12.2 14.5 L4.8 14.5 Z" fill="#80bcff"/><path d="M2.5 13.5 L4 15.5 M14.5 13.5 L13 15.5" stroke="#e8d8c0" stroke-width="1.2"/><circle cx="8.5" cy="5.3" r="3.4" fill="#f6cca4"/><path d="M5 5.2 Q4.8 1.6 8.5 1.5 Q12.2 1.6 12 5 Q10.5 3.6 8 4.2 Q6 4.5 5 5.2Z" fill="#8a4418"/></svg><div class="abs ul nw" style="left:22px;top:1px;line-height:15px">&lt;CL&gt;Krieger</div></div>
<div class="abs sbtrk" style="left:307px;top:0;width:16px;height:569px">
<div class="abs sbbtn" style="left:0;top:1px;width:16px;height:15px"><svg class="abs" style="left:3px;top:4px" width="9" height="6"><path d="M1 5 L4.5 1.5 L8 5" stroke="#4d6185" stroke-width="2" fill="none"/></svg></div>
<div class="abs thumb" style="left:0;top:18px;width:16px;height:176px"><div class="abs" style="left:4px;top:84px;width:8px;height:8px;background:repeating-linear-gradient(#eef4ff 0,#eef4ff 1px,#8c9ece 1px,#8c9ece 2px)"></div></div>
<div class="abs sbbtn" style="left:1px;top:553px;width:14px;height:15px"><svg class="abs" style="left:2px;top:4px" width="9" height="6"><path d="M1 1 L4.5 4.5 L8 1" stroke="#4d6185" stroke-width="2" fill="none"/></svg></div>
</div>
</div>
</div>
<div class="abs" style="left:0;top:1022px;width:1280px;height:2px;background:#3d7fe0"></div>
<div class="abs" style="left:365px;top:333px;width:302px;height:159px;background:#7b8cdc;border-radius:7px 7px 0 0">
<div class="abs" style="left:0;top:0;width:302px;height:29px;border-radius:7px 7px 0 0;background:linear-gradient(#9ab6ee 0,#97b3ee 2px,#7b97e0 6px,#7a96de 12px,#7f9ce6 18px,#7aa8ee 21px,#7ea6ec 24px,#7b8fdc 27px,#8a94dc 29px)"></div>
<div class="abs nw" style="left:7px;top:8px;font-size:13px;font-weight:bold;color:#d8e4f8;line-height:16px">You Were Kicked!</div>
<svg class="abs tb cl" style="left:276px;top:5px" width="21" height="21" viewBox="0 0 21 21"><path d="M5 5 L15 15 M15 5 L5 15" stroke="#fff" stroke-width="2"/></svg>
<div class="abs" style="left:3px;top:29px;width:296px;height:127px;background:#ece9d8;border-top:1px solid #f0f0f8">
<svg class="abs" style="left:10px;top:11px" width="32" height="32" viewBox="0 0 32 32"><defs><linearGradient id="wg" x1="0" y1="0" x2="0" y2="1"><stop offset="0" stop-color="#fff830"/><stop offset="0.7" stop-color="#f8e010"/><stop offset="1" stop-color="#e8c000"/></linearGradient></defs><path d="M13.5 3.5 Q15.5 0.5 17.5 3.5 L30 26.5 Q31.5 29.5 28 29.5 L4 29.5 Q0.5 29.5 2 26.5 Z" fill="url(#wg)"/><path d="M17.5 3.5 L30 26.5 Q31.5 29.5 28 29.5 L4 29.5" stroke="#1a1000" stroke-width="1.6" fill="none"/><path d="M13.5 9 L18 9 L16.6 21.5 L14.9 21.5 Z" fill="#180820"/><circle cx="15.7" cy="25" r="2.1" fill="#180820"/></svg>
<div class="abs nw" style="left:61px;top:11px;font-size:11px;line-height:13px;color:#000">You were kicked from the server by:<br>[-Ts-] SlipKnoT<br><br>Reason:<br>your taking too much room on lobb. i need spot</div>
<div class="abs" style="left:111px;top:93px;width:73px;height:21px;border:1px solid #1c3c60;border-radius:3px;background:linear-gradient(#fffffe,#f4f2ea 40%,#ece9d8 85%,#d8d4c4);font-size:11px;line-height:20px;text-align:center;color:#000">OK</div>
</div>
</div>
</body></html>
